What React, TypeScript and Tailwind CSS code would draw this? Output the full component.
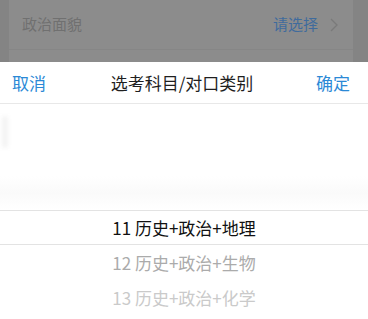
import React from 'react'

const options = [
  { code: '11', label: '历史+政治+地理' },
  { code: '12', label: '历史+政治+生物' },
  { code: '13', label: '历史+政治+化学' },
  { code: '14', label: '历史+地理+生物' },
]

const font = { fontFamily: '"Noto Sans CJK SC", "Noto Sans", sans-serif' }

function Chevron() {
  return (
    <svg width="8" height="14" viewBox="0 0 8 14" fill="none" stroke="#7a7a7a" strokeWidth="1.3">
      <path d="M1 1l6 6-6 6" />
    </svg>
  )
}

function Backdrop() {
  return (
    <div className="h-[62px] overflow-hidden bg-[#848484] pl-[9px] pr-[15px]">
      <div className="h-full bg-[#8c8c8c]">
        <div className="flex h-[50px] items-center justify-between border-b border-[#868686] pl-[13px] pr-[15px]">
          <span className="text-[15px] text-[#707070]">政治面貌</span>
          <span className="flex items-center gap-[12px] text-[15px] text-[#3f6b9d]">
            请选择
            <Chevron />
          </span>
        </div>
        <div className="flex h-[50px] items-center justify-between pl-[13px] pr-[15px]">
          <span className="text-[15px] text-[#707070]">考生类别</span>
          <span className="flex items-center gap-[12px] text-[15px] text-[#3f6b9d]">
            请选择
            <Chevron />
          </span>
        </div>
      </div>
    </div>
  )
}

export default function App() {
  return (
    <div className="h-[319px] w-[368px] overflow-hidden bg-white" style={font}>
      <Backdrop />
      <div className="bg-white">
        <div className="flex h-[42px] items-center justify-between border-b border-[#e8e8e8] pl-[12px] pr-[18px] text-[17px] leading-[24px]">
          <button className="text-[#2b89d6]">取消</button>
          <span className="pl-[2px] text-[#1f1f1f]">选考科目/对口类别</span>
          <button className="text-[#2b89d6]">确定</button>
        </div>
        <div className="relative h-[215px]">
          <div className="h-[72px]" />
          <div className="h-[34px] bg-gradient-to-b from-white via-[#fafafa] to-white" />
          <div className="flex h-[35px] items-center justify-center border-y border-[#e3e3e3] text-[17px] text-[#111]">
            {options[0].code} {options[0].label}
          </div>
          <div className="flex h-[35px] items-center justify-center text-[17px] text-[#ababab]">
            {options[1].code} {options[1].label}
          </div>
          <div className="flex h-[35px] items-center justify-center text-[17px] text-[#cacaca]">
            {options[2].code} {options[2].label}
          </div>
          <div className="flex h-[35px] items-center justify-center text-[17px] text-[#ececec]">
            {options[3].code} {options[3].label}
          </div>
          <div className="pointer-events-none absolute left-[2px] top-[12px] h-[32px] w-[6px] rounded-sm bg-[#f3f3f3] blur-[2px]" />
        </div>
      </div>
    </div>
  )
}
